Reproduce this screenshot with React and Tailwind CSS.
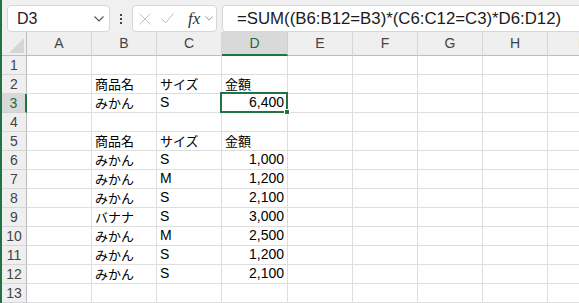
import React from 'react';

const COLS = [
  { key: 'A', w: 'w-[65px]' },
  { key: 'B', w: 'w-[65px]' },
  { key: 'C', w: 'w-[65px]' },
  { key: 'D', w: 'w-[66px]' },
  { key: 'E', w: 'w-[65px]' },
  { key: 'F', w: 'w-[65px]' },
  { key: 'G', w: 'w-[65px]' },
  { key: 'H', w: 'w-[65px]' },
  { key: 'I', w: 'w-[65px]' },
];

const ROWS = {
  2: { B: '商品名', C: 'サイズ', D: '金額' },
  3: { B: 'みかん', C: 'S', D: '6,400' },
  5: { B: '商品名', C: 'サイズ', D: '金額' },
  6: { B: 'みかん', C: 'S', D: '1,000' },
  7: { B: 'みかん', C: 'M', D: '1,200' },
  8: { B: 'みかん', C: 'S', D: '2,100' },
  9: { B: 'バナナ', C: 'S', D: '3,000' },
  10: { B: 'みかん', C: 'M', D: '2,500' },
  11: { B: 'みかん', C: 'S', D: '1,200' },
  12: { B: 'みかん', C: 'S', D: '2,100' },
};

const isCJK = (s) => /[\u3040-\u30ff\u4e00-\u9fff]/.test(s);
const isNum = (s) => /^[\d,]+$/.test(s);

function Chevron({ className }) {
  return (
    <svg className={className} viewBox="0 0 10 6" fill="none">
      <path d="M0.5 0.5 L5 5 L9.5 0.5" stroke="currentColor" strokeWidth="1.1" />
    </svg>
  );
}

function Toolbar() {
  return (
    <div className="flex h-[37px] items-start bg-[#f0f0f0] pt-[5px] pl-[5px]">
      <div className="flex h-[27px] w-[103px] shrink-0 items-center justify-between rounded-[4px] border border-[#d6d6d6] bg-white pl-[9px] pr-[5px]">
        <span className="font-['Liberation_Sans',sans-serif] text-[16px] text-[#222]">D3</span>
        <Chevron className="h-[6px] w-[10px] text-[#555]" />
      </div>
      <div className="flex h-[27px] w-[22px] shrink-0 flex-col items-center justify-center gap-[2px]">
        <span className="h-[2px] w-[2px] bg-[#444]" />
        <span className="h-[2px] w-[2px] bg-[#444]" />
        <span className="h-[2px] w-[2px] bg-[#444]" />
      </div>
      <div className="flex h-[27px] w-[85px] shrink-0 items-center rounded-[4px] border border-[#d6d6d6] bg-white pl-[6px]">
        <svg className="h-[12px] w-[12px]" viewBox="0 0 12 12" fill="none">
          <path d="M0.5 0.5 L11.5 11.5 M11.5 0.5 L0.5 11.5" stroke="#c4c4c4" strokeWidth="1" />
        </svg>
        <svg className="ml-[10px] h-[11px] w-[13px]" viewBox="0 0 13 11" fill="none">
          <path d="M0.5 5.5 L4.5 10 L12.5 0.5" stroke="#bcbcbc" strokeWidth="1" />
        </svg>
        <span className="ml-[14px] font-['Liberation_Serif',serif] text-[17px] leading-none italic text-[#333]">
          fx
        </span>
        <Chevron className="ml-[5px] h-[5px] w-[8px] text-[#888]" />
      </div>
      <div className="ml-[5px] flex h-[27px] flex-1 items-center rounded-l-[4px] border border-r-0 border-[#d6d6d6] bg-white pl-[14px]">
        <span className="font-['Liberation_Sans',sans-serif] text-[16.8px] whitespace-nowrap text-[#1a1a1a]">
          =SUM((B6:B12=B3)*(C6:C12=C3)*D6:D12)
        </span>
      </div>
    </div>
  );
}

function HeaderRow() {
  return (
    <div className="flex h-[24px] bg-[#efefef] font-['Liberation_Sans',sans-serif] text-[14px] text-[#444]">
      <div className="relative w-[25px] shrink-0 border-r border-b border-[#bdbdbd]">
        <svg className="absolute right-[2px] bottom-[2px] h-[15px] w-[15px]" viewBox="0 0 15 15">
          <path d="M15 0 L15 15 L0 15 Z" fill="#d6d6d6" />
        </svg>
      </div>
      {COLS.map((c) =>
        c.key === 'D' ? (
          <div
            key={c.key}
            className={`${c.w} flex shrink-0 items-center justify-center border-r border-b-2 border-r-[#d0d0d0] border-b-[#217346] bg-[#d9d9d9] pt-[1px] text-[#1e6b40]`}
          >
            {c.key}
          </div>
        ) : (
          <div
            key={c.key}
            className={`${c.w} flex shrink-0 items-center justify-center border-r border-b border-r-[#d6d6d6] border-b-[#bdbdbd]`}
          >
            {c.key}
          </div>
        )
      )}
    </div>
  );
}

function Cell({ col, value, selected }) {
  const cjk = value && isCJK(value);
  const num = value && isNum(value);
  return (
    <div
      className={`${col.w} relative flex shrink-0 items-end border-r border-b border-[#dedede] px-[3px] pb-[1px] ${
        num ? 'justify-end' : 'justify-start'
      }`}
    >
      {value && (
        <span
          className={
            cjk
              ? "font-['Noto_Sans_CJK_JP',sans-serif] text-[13px] leading-[17px] text-black"
              : "font-['Liberation_Sans',sans-serif] text-[14px] leading-[17px] text-black"
          }
        >
          {value}
        </span>
      )}
      {selected && (
        <div className="pointer-events-none absolute -top-[2px] -right-[1px] -bottom-[1px] -left-[2px] z-10 border-2 border-[#217346]">
          <div className="absolute -right-[4px] -bottom-[4px] h-[6px] w-[6px] border border-white bg-[#217346]" />
        </div>
      )}
    </div>
  );
}

function Row({ n }) {
  const data = ROWS[n] || {};
  const sel = n === 3;
  return (
    <div className="flex h-[19px] shrink-0">
      <div
        className={
          sel
            ? "flex w-[25px] shrink-0 items-center justify-center border-r-2 border-b border-r-[#217346] border-b-[#d0d0d0] bg-[#d9d9d9] font-['Liberation_Sans',sans-serif] text-[14px] text-[#1e6b40]"
            : "flex w-[25px] shrink-0 items-center justify-center border-r border-b border-r-[#bdbdbd] border-b-[#d6d6d6] bg-[#efefef] font-['Liberation_Sans',sans-serif] text-[14px] text-[#444]"
        }
      >
        {n}
      </div>
      {COLS.map((c) => (
        <Cell key={c.key} col={c} value={data[c.key]} selected={sel && c.key === 'D'} />
      ))}
    </div>
  );
}

export default function App() {
  const rows = Array.from({ length: 13 }, (_, i) => i + 1);
  return (
    <div className="flex h-[303px] w-[579px] overflow-hidden bg-white">
      <div className="w-[2px] shrink-0 bg-[#217346]" />
      <div className="flex min-w-0 flex-1 flex-col overflow-hidden">
        <Toolbar />
        <HeaderRow />
        {rows.map((n) => (
          <Row key={n} n={n} />
        ))}
      </div>
    </div>
  );
}
